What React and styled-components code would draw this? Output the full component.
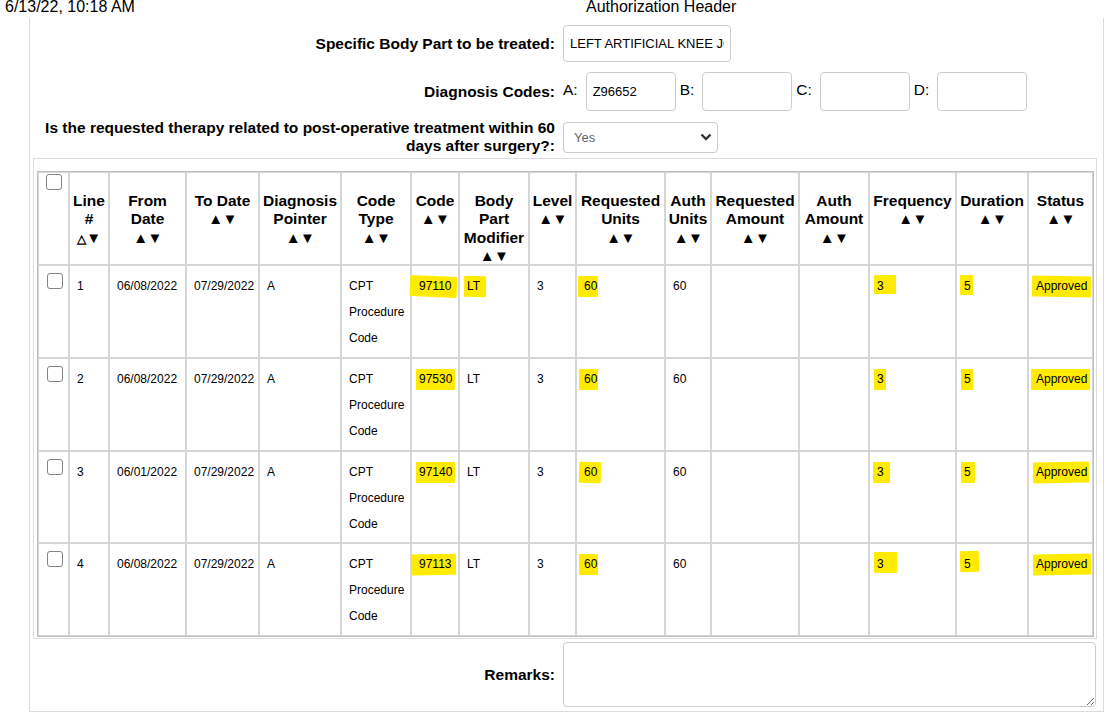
import React from "react";
import styled, { createGlobalStyle } from "styled-components";

const GlobalStyle = createGlobalStyle`
  html, body { margin: 0; padding: 0; background: #fff; }
  body { font-family: "Liberation Sans", Arial, sans-serif; color: #000; }
  * { box-sizing: border-box; }
`;

const PrintHeader = styled.div`
  display: flex;
  height: 18px;
  font-size: 16px;
  line-height: 14px;
`;

const PrintDate = styled.div`
  width: 586px;
  padding-left: 5px;
`;

const PrintTitle = styled.div``;

const Sheet = styled.div`
  margin-left: 29px;
  width: 1075px;
  border: 1px solid #ddd;
  border-top: none;
  padding: 7px 0 4px;
`;

const FieldRow = styled.div`
  display: grid;
  grid-template-columns: 525px 1fr;
  column-gap: 8px;
  align-items: center;
  margin-top: ${(p) => p.$top || 0}px;
`;

const FieldLabel = styled.div`
  text-align: right;
  font-weight: bold;
  font-size: 15.5px;
  line-height: 18px;
`;

const TextBox = styled.input`
  width: ${(p) => p.$w}px;
  height: ${(p) => p.$h}px;
  border: 1px solid #ccc;
  border-radius: 4px;
  padding: 0 6px;
  font-family: "Liberation Sans", Arial, sans-serif;
  font-size: 13px;
  color: #000;
  background: #fff;
  outline: none;
`;

const CodeGroup = styled.div`
  display: flex;
  align-items: center;
`;

const CodeLetter = styled.span`
  font-size: 15.5px;
  margin-right: 8px;
  margin-top: -4px;
`;

const CodeSlot = styled.div`
  display: flex;
  align-items: center;
  margin-right: 4px;
`;

const SelectWrap = styled.div`
  position: relative;
  width: 155px;
  height: 31px;
`;

const Select = styled.select`
  appearance: none;
  -webkit-appearance: none;
  width: 100%;
  height: 100%;
  border: 1px solid #ccc;
  border-radius: 4px;
  padding: 0 10px;
  font-family: "Liberation Sans", Arial, sans-serif;
  font-size: 13px;
  color: #666;
  background: #fff;
  outline: none;
`;

const Chevron = styled.svg`
  position: absolute;
  right: 6px;
  top: 10px;
  pointer-events: none;
`;

const TableBox = styled.div`
  margin: 3px 6px 0 3px;
  border: 1px solid #ddd;
  padding: 12px 4px 1px 3px;
`;

const Grid = styled.table`
  width: 1055px;
  table-layout: fixed;
  border-collapse: separate;
  border-spacing: 0;
  border: 1px solid #bdbdbd;
`;

const HeadCell = styled.th`
  border: 1px solid #d6d6d6;
  vertical-align: top;
  text-align: center;
  padding: 19px 0 0;
  font-size: 15.5px;
  line-height: 18.4px;
  font-weight: bold;
  white-space: nowrap;
`;

const CheckHeadCell = styled(HeadCell)`
  text-align: left;
  padding: 1px 0 0 7px;
`;

const HeadLine = styled.div``;

const SortArrows = styled.div`
  font-size: 15px;
  line-height: 17px;
  letter-spacing: -0.5px;
`;

const OpenArrow = styled.span`
  font-size: 12px;
  letter-spacing: 0;
`;

const Cell = styled.td`
  border: 1px solid #d6d6d6;
  vertical-align: top;
  padding: 7px 4px 5.75px 7px;
  font-size: 12px;
  line-height: 26px;
`;

const CheckCell = styled(Cell)`
  padding: 7px 0 0 8px;
  line-height: 16px;
`;

const Check = styled.span`
  display: block;
  width: 16px;
  height: 16px;
  border: 1px solid #858585;
  border-radius: 3px;
  background: #fff;
`;

const Mark = styled.span`
  position: relative;
  z-index: 0;
  &::before {
    content: "";
    position: absolute;
    z-index: -1;
    left: -${(p) => p.$l}px;
    right: -${(p) => p.$r}px;
    top: ${(p) => p.$t ?? -3}px;
    bottom: ${(p) => p.$b ?? -4}px;
    background: #ffeb00;
    transform: rotate(${(p) => p.$tilt || 0}deg);
    border-radius: 1px;
  }
`;

const RemarksArea = styled.textarea`
  width: 533px;
  height: 65px;
  border: 1px solid #ccc;
  border-radius: 4px;
  font-family: "Liberation Sans", Arial, sans-serif;
  font-size: 13px;
  display: block;
  outline: none;
`;

const columns = [
  { w: 31 },
  { w: 40, lines: ["Line", "#"], open: true },
  { w: 77, lines: ["From", "Date"] },
  { w: 73, lines: ["To Date"] },
  { w: 82, lines: ["Diagnosis", "Pointer"] },
  { w: 70, lines: ["Code", "Type"] },
  { w: 48, lines: ["Code"] },
  { w: 70, lines: ["Body", "Part", "Modifier"] },
  { w: 47, lines: ["Level"] },
  { w: 89, lines: ["Requested", "Units"] },
  { w: 46, lines: ["Auth", "Units"] },
  { w: 88, lines: ["Requested", "Amount"] },
  { w: 70, lines: ["Auth", "Amount"] },
  { w: 87, lines: ["Frequency"] },
  { w: 72, lines: ["Duration"] },
  { w: 65, lines: ["Status"] },
];

const rows = [
  {
    line: "1", from: "06/08/2022", to: "07/29/2022", code: "97110",
    codeMark: { l: 9, r: 6, tilt: 2.5 }, modMark: { l: 3, r: 6, tilt: 1 },
    unitsMark: { l: 6, r: 1 }, freqMark: { l: 3, r: 12, t: -4, b: -1 },
    durMark: { l: 4, r: 2, t: -4, b: -2 }, statusMark: { l: 4, r: 4, tilt: 1 },
  },
  {
    line: "2", from: "06/08/2022", to: "07/29/2022", code: "97530",
    codeMark: { l: 3, r: 3 }, modMark: null,
    unitsMark: { l: 5, r: 1 }, freqMark: { l: 3, r: 2 },
    durMark: { l: 3, r: 2 }, statusMark: { l: 5, r: 3 },
  },
  {
    line: "3", from: "06/01/2022", to: "07/29/2022", code: "97140",
    codeMark: { l: 3, r: 3 }, modMark: null,
    unitsMark: { l: 5, r: 4, tilt: 2 }, freqMark: { l: 4, r: 6 },
    durMark: { l: 3, r: 4 }, statusMark: { l: 3, r: 2, tilt: -1 },
  },
  {
    line: "4", from: "06/08/2022", to: "07/29/2022", code: "97113",
    codeMark: { l: 8, r: 5, tilt: -1 }, modMark: null,
    unitsMark: { l: 5, r: 1 }, freqMark: { l: 3, r: 13, t: -5, b: -2 },
    durMark: { l: 4, r: 8, t: -6, b: -1, tilt: -2 }, statusMark: { l: 3, r: 4, tilt: -1 },
  },
];

function Marked({ m, children }) {
  if (!m) return children;
  return (
    <Mark $l={m.l} $r={m.r} $t={m.t} $b={m.b} $tilt={m.tilt}>
      {children}
    </Mark>
  );
}

export default function App() {
  return (
    <>
      <GlobalStyle />
      <PrintHeader>
        <PrintDate>6/13/22, 10:18 AM</PrintDate>
        <PrintTitle>Authorization Header</PrintTitle>
      </PrintHeader>
      <Sheet>
        <FieldRow>
          <FieldLabel>Specific Body Part to be treated:</FieldLabel>
          <div>
            <TextBox $w={168} $h={37} defaultValue="LEFT ARTIFICIAL KNEE JOINT" />
          </div>
        </FieldRow>
        <FieldRow $top={10}>
          <FieldLabel>Diagnosis Codes:</FieldLabel>
          <CodeGroup>
            {[
              ["A:", "Z96652"],
              ["B:", ""],
              ["C:", ""],
              ["D:", ""],
            ].map(([letter, val]) => (
              <CodeSlot key={letter}>
                <CodeLetter>{letter}</CodeLetter>
                <TextBox $w={90} $h={39} defaultValue={val} />
              </CodeSlot>
            ))}
          </CodeGroup>
        </FieldRow>
        <FieldRow $top={8}>
          <FieldLabel>
            Is the requested therapy related to post-operative treatment within 60
            <br />
            days after surgery?:
          </FieldLabel>
          <SelectWrap>
            <Select defaultValue="Yes">
              <option>Yes</option>
              <option>No</option>
            </Select>
            <Chevron width="12" height="10" viewBox="0 0 12 10">
              <path d="M1.5 2.5 L6 7 L10.5 2.5" fill="none" stroke="#333" strokeWidth="2.4" />
            </Chevron>
          </SelectWrap>
        </FieldRow>
        <TableBox>
          <Grid>
            <colgroup>
              {columns.map((c, i) => (
                <col key={i} style={{ width: c.w }} />
              ))}
            </colgroup>
            <thead>
              <tr>
                <CheckHeadCell>
                  <Check />
                </CheckHeadCell>
                {columns.slice(1).map((c, i) => (
                  <HeadCell key={i}>
                    {c.lines.map((l) => (
                      <HeadLine key={l}>{l}</HeadLine>
                    ))}
                    <SortArrows>
                      {c.open ? <OpenArrow>△</OpenArrow> : "▲"}▼
                    </SortArrows>
                  </HeadCell>
                ))}
              </tr>
            </thead>
            <tbody>
              {rows.map((r) => (
                <tr key={r.line}>
                  <CheckCell>
                    <Check />
                  </CheckCell>
                  <Cell>{r.line}</Cell>
                  <Cell>{r.from}</Cell>
                  <Cell>{r.to}</Cell>
                  <Cell>A</Cell>
                  <Cell>CPT Procedure Code</Cell>
                  <Cell>
                    <Marked m={r.codeMark}>{r.code}</Marked>
                  </Cell>
                  <Cell>
                    <Marked m={r.modMark}>LT</Marked>
                  </Cell>
                  <Cell>3</Cell>
                  <Cell>
                    <Marked m={r.unitsMark}>60</Marked>
                  </Cell>
                  <Cell>60</Cell>
                  <Cell />
                  <Cell />
                  <Cell>
                    <Marked m={r.freqMark}>3</Marked>
                  </Cell>
                  <Cell>
                    <Marked m={r.durMark}>5</Marked>
                  </Cell>
                  <Cell>
                    <Marked m={r.statusMark}>Approved</Marked>
                  </Cell>
                </tr>
              ))}
            </tbody>
          </Grid>
        </TableBox>
        <FieldRow $top={3}>
          <FieldLabel>Remarks:</FieldLabel>
          <RemarksArea />
        </FieldRow>
      </Sheet>
    </>
  );
}
